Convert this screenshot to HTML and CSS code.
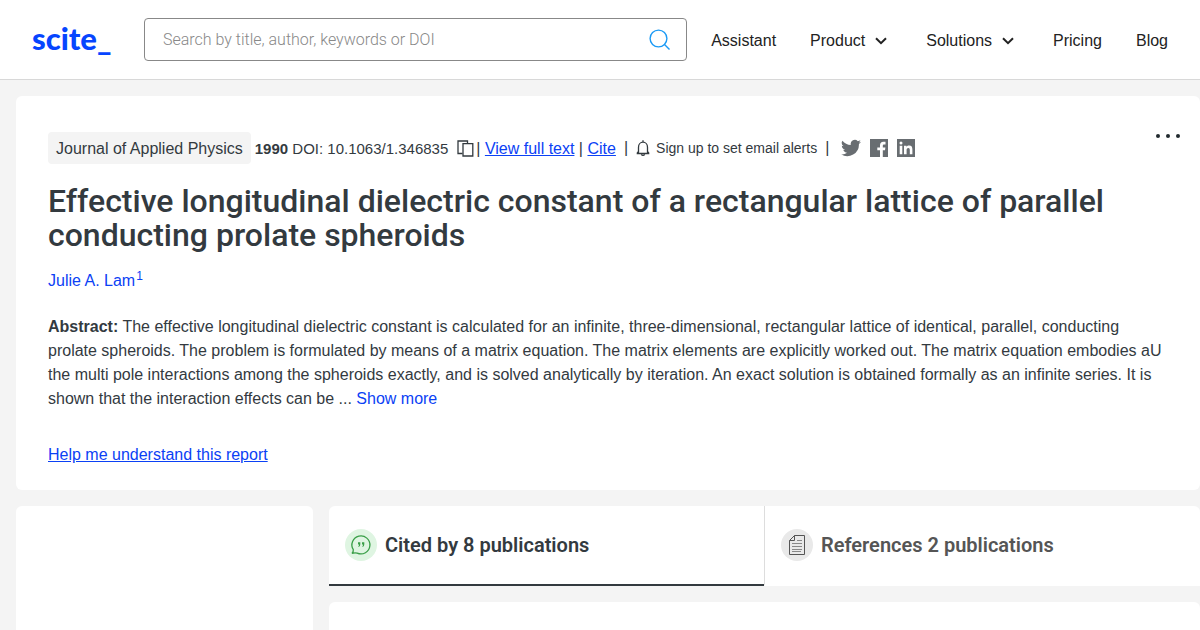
FILE: index.html
```html
<!DOCTYPE html>
<html lang="en">
<head>
<meta charset="utf-8">
<title>Effective longitudinal dielectric constant - scite</title>
<link rel="stylesheet" href="styles.css">
</head>
<body>
<header class="site-header">
  <a class="logo" href="#">scite_</a>
  <form class="search">
    <input class="search-input" type="search" aria-label="Search" placeholder="Search by title, author, keywords or DOI">
    <button class="search-button" type="button" aria-label="Submit search">
      <svg width="22" height="22" viewBox="0 0 22 22" fill="none" stroke="#1b9af5" stroke-width="1.4"><circle cx="9.500" cy="9.500" r="8.400"/><path d="M15.300 15.300 20.500 20.500"/></svg>
    </button>
  </form>
  <nav class="nav">
    <a href="#">Assistant</a>
    <button type="button">Product <svg width="12" height="8" viewBox="0 0 12 8" fill="none" stroke="#222" stroke-width="2"><path d="M1 1.200 6 6.200 11 1.200"/></svg></button>
    <button type="button">Solutions <svg width="12" height="8" viewBox="0 0 12 8" fill="none" stroke="#222" stroke-width="2"><path d="M1 1.200 6 6.200 11 1.200"/></svg></button>
    <a href="#">Pricing</a>
    <a href="#">Blog</a>
  </nav>
</header>
<main class="page">
  <article class="card paper">
    <div class="meta">
      <span class="journal">Journal of Applied Physics</span>
      <span class="doi"><b>1990</b> DOI: 10.1063/1.346835</span>
      <button class="copy" type="button" aria-label="Copy DOI">
        <svg width="17" height="17" viewBox="0 0 17 17" fill="none" stroke="#333a3f" stroke-width="1.300"><path d="M5.500 13.500H1V1H10.500V3.500"/><path d="M6 3.700H15.800V16H6Z"/></svg>
      </button>
      <span class="links">| <a href="#">View full text</a> | <a href="#">Cite</a></span>
      <span class="bar">|</span>
      <button class="alerts" type="button">
        <svg width="14" height="17" viewBox="0 0 14 17" fill="none" stroke="#333a3f" stroke-width="1.300"><path d="M7 .3V2M.7 13.500H13.300M2.500 13.300V7.200A4.500 5 0 0 1 11.500 7.200V13.300M1 13.300 2.500 11.300M13 13.300 11.500 11.300"/><path d="M5.400 14.300A1.700 1.700 0 0 0 8.600 14.300"/></svg>
        Sign up to set email alerts
      </button>
      <span class="bar">|</span>
      <span class="social">
        <a href="#" aria-label="Twitter"><svg width="20" height="18" viewBox="0 2 24 20" fill="#686d71"><path d="M24 4.600a10 10 0 0 1-2.800.8 5 5 0 0 0 2.100-2.700 10 10 0 0 1-3.100 1.200 4.900 4.900 0 0 0-8.400 4.500A14 14 0 0 1 1.700 3.200a4.900 4.900 0 0 0 1.500 6.600 4.900 4.900 0 0 1-2.200-.6c0 2.300 1.600 4.400 3.900 4.900a5 5 0 0 1-2.200.1 4.900 4.900 0 0 0 4.600 3.400A9.900 9.900 0 0 1 0 19.600 14 14 0 0 0 21.500 7.100 10 10 0 0 0 24 4.600z"/></svg></a>
        <a href="#" aria-label="Facebook"><svg width="18" height="18" viewBox="0 0 18 18"><path fill="#686d71" d="M0 0H18V18H0Z"/><path fill="#fff" d="M10 18V11.200H7.300V8.400H10V6.300C10 4 11.300 2.800 13.300 2.800H15.500V5.400H14.100C13 5.400 12.800 6 12.800 6.800V8.400H15.400L15 11.200H12.800V18Z"/></svg></a>
        <a href="#" aria-label="LinkedIn"><svg width="18" height="18" viewBox="0 0 18 18"><path fill="#686d71" d="M0 0H18V18H0Z"/><path fill="#fff" d="M2.700 6.800H5.300V15.300H2.700ZM7 6.800H9.500V8C10 7.100 11 6.600 12.100 6.600 14.700 6.600 15.400 8.200 15.400 10.700V15.300H12.800V11.200C12.800 9.900 12.600 8.900 11.300 8.900 10 8.900 9.600 9.900 9.600 11.100V15.300H7Z"/><circle cx="4" cy="4.100" r="1.500" fill="#fff"/></svg></a>
      </span>
      <button class="more" type="button" aria-label="More options"><svg width="26" height="6" viewBox="0 0 26 6" fill="#222a2f"><circle cx="3" cy="3" r="2"/><circle cx="13" cy="3" r="2"/><circle cx="23" cy="3" r="2"/></svg></button>
    </div>
    <h1>Effective longitudinal dielectric constant of a rectangular lattice of parallel conducting prolate spheroids</h1>
    <p class="author"><a href="#">Julie A. Lam</a><sup>1</sup></p>
    <p class="abstract"><b>Abstract:</b> The effective longitudinal dielectric constant is calculated for an infinite, three-dimensional, rectangular lattice of identical, parallel, conducting prolate spheroids. The problem is formulated by means of a matrix equation. The matrix elements are explicitly worked out. The matrix equation embodies aU the multi pole interactions among the spheroids exactly, and is solved analytically by iteration. An exact solution is obtained formally as an infinite series. It is shown that the interaction effects can be ... <a href="#">Show more</a></p>
    <a class="help" href="#">Help me understand this report</a>
  </article>
  <div class="columns">
    <aside class="card side"></aside>
    <section class="results">
      <div class="card tabs">
        <button class="tab active" type="button">
          <svg width="32" height="32" viewBox="0 0 32 32"><circle cx="16" cy="16" r="16" fill="#dff5e2"/><path d="M8.300 20.700A9 9 0 1 1 12.200 24.100Q9.500 23.400 7 24.500 8.600 22.600 8.300 20.700Z" fill="none" stroke="#3a9f48" stroke-width="1.300"/><path d="M13 13.300H15.300V15.200Q15.300 17.200 13.700 18L13.300 17.300Q14.200 16.500 14 15.400H13ZM17 13.300H19.300V15.200Q19.300 17.200 17.700 18L17.300 17.300Q18.200 16.500 18 15.400H17Z" fill="#3a9f48"/></svg>
          Cited by 8 publications
        </button>
        <button class="tab" type="button">
          <svg width="32" height="32" viewBox="0 0 32 32"><circle cx="16" cy="16" r="16" fill="#e9e9e9"/><path d="M13.500 6.500H23.500V25.500H8.500V11.500ZM13.500 6.500V11.500H8.500" fill="none" stroke="#555"/><path d="M16 11.500H21M11 14.500H21M11 17.500H21M11 20.500H21M11 22.500H20" stroke="#888"/></svg>
          References 2 publications
        </button>
      </div>
      <div class="card list"></div>
    </section>
  </div>
</main>
</body>
</html>
```
FILE: styles.css
```css
* { box-sizing: border-box; }
body {
  display: flex;
  flex-direction: column;
  min-height: 100vh;
  margin: 0;
  background: #f4f4f4;
  color: #333a3f;
  font: 16px/24px "Liberation Sans", Arial, sans-serif;
}
button { padding: 0; border: 0; background: none; color: inherit; font: inherit; cursor: pointer; }
a { color: #0b41f5; }
svg { display: block; flex: none; }
.site-header {
  display: flex;
  align-items: center;
  height: 80px;
  padding: 0 32px;
  background: #fff;
  border-bottom: 1px solid #d8d8d8;
}
.logo {
  width: 112px;
  padding-bottom: 4px;
  color: #0645ff;
  font: 900 31px/32px Lato, sans-serif;
  text-decoration: none;
}
.search {
  display: flex;
  align-items: center;
  flex: 1;
  height: 43px;
  padding: 0 15px 0 18px;
  border: 1px solid #888;
  border-radius: 4px;
}
.search-input { flex: 1; min-width: 0; padding: 0; border: 0; outline: 0; background: none; font: 300 16px/24px Roboto, sans-serif; }
.search-input::placeholder { color: #888; opacity: 1; }
.nav { display: flex; gap: 34px; margin-left: 24px; padding-top: 2px; color: #222; }
.nav a { color: inherit; text-decoration: none; }
.nav button { display: flex; align-items: center; gap: 10px; padding-right: 5px; }
.page { display: flex; flex-direction: column; flex: 1; padding: 16px 0 0 16px; }
.card { background: #fff; border-radius: 6px; }
.paper { padding: 36px 32px 23px; }
.meta { display: flex; align-items: center; gap: 4px; white-space: nowrap; }
.journal { padding: 5px 8px 3px; background: #f4f4f4; border-radius: 4px; }
.doi { padding-top: 1px; font-size: 15px; }
.copy { margin-left: 5px; }
.links { margin-left: -2px; padding-top: 2px; }
.bar { margin: 0 4px; }
.alerts { display: flex; align-items: center; gap: 6px; font-size: 14px; }
.social { display: flex; align-items: center; gap: 9px; margin-left: 4px; }
.more { align-self: flex-start; margin: 1px -13px 0 auto; }
h1 { margin: 20px 0 17px; font: 500 32px/34px Roboto, sans-serif; }
.author { margin: 0 0 22px; }
.author a, .abstract a { text-decoration: none; }
sup { color: #0b41f5; font-size: 12px; line-height: 0; margin-left: 1px; }
.abstract { margin: 0 0 32px; }
.help { display: block; width: fit-content; }
.columns { display: flex; flex: 1; gap: 16px; margin-top: 16px; }
.side { width: 297px; border-radius: 6px 6px 0 0; }
.results { display: flex; flex-direction: column; flex: 1; }
.tabs { display: flex; height: 80px; border-radius: 6px 6px 0 0; }
.tab {
  display: flex;
  align-items: center;
  flex: 1;
  gap: 8px;
  padding: 0 16px;
  border-bottom: 2px solid transparent;
  color: #555;
  font: 600 20px/24px Roboto, sans-serif;
}
.tab.active { border-bottom-color: #333a3f; color: #333a3f; }
.tab + .tab { border-left: 1px solid #ddd; }
.list { flex: 1; margin-top: 16px; border-radius: 6px 6px 0 0; }
```
